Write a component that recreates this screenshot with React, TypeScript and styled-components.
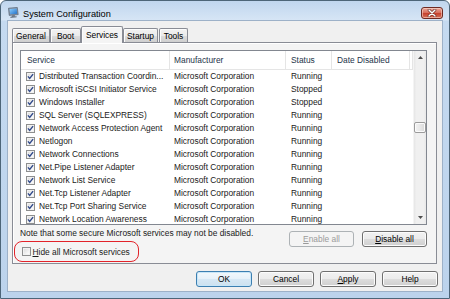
import React from "react";
import styled, { createGlobalStyle } from "styled-components";

const FONT = `"Liberation Sans", Arial, sans-serif`;

const Global = createGlobalStyle`
  html, body { margin: 0; padding: 0; background: #ffffff; }
  body { font-family: ${FONT}; font-size: 8.4px; color: #1a1a1a; }
  * { box-sizing: border-box; }
`;

const Frame = styled.div`
  width: 450px;
  height: 299px;
  border: 1px solid #4d6578;
  border-radius: 6px 6px 0 0;
  background: linear-gradient(to bottom, #c0d6ee 0px, #d6e5f5 19px, #c5daf0 20px, #bcd3ec 100%);
  display: flex;
  flex-direction: column;
  padding: 0 6px 6px 6px;
  overflow: hidden;
`;

const TitleBar = styled.div`
  height: 19px;
  display: flex;
  align-items: flex-start;
  padding-top: 6px;
`;

const TitleIcon = styled.svg`
  width: 11px;
  height: 11px;
  margin-left: 1px;
  flex: none;
`;

const TitleText = styled.div`
  margin-left: 4px;
  margin-top: 2px;
  font-size: 9.2px;
  line-height: 11px;
  color: #000;
`;

const CloseButton = styled.div`
  margin-left: auto;
  width: 22px;
  height: 12px;
  border: 1px solid #6e2a22;
  border-radius: 3px;
  background: linear-gradient(to bottom, #e9a99b 0%, #d9705f 45%, #c6432f 55%, #d5705a 100%);
  box-shadow: inset 0 0 0 1px rgba(255, 220, 210, 0.55);
  display: flex;
  align-items: center;
  justify-content: center;
`;

const Client = styled.div`
  flex: 1;
  background: #f0f0f0;
  border: 1px solid #9db1c8;
  padding: 5px 5px 4px 4px;
  display: flex;
  flex-direction: column;
`;

const TabStrip = styled.div`
  height: 17px;
  margin-bottom: -1px;
  display: flex;
  align-items: flex-end;
  position: relative;
  z-index: 1;
`;

const Tab = styled.div<{ $w: number; $active?: boolean; $gap?: number }>`
  width: ${(p) => p.$w}px;
  margin-left: ${(p) => p.$gap ?? 0}px;
  height: ${(p) => (p.$active ? 17 : 14)}px;
  margin-bottom: ${(p) => (p.$active ? 0 : 1)}px;
  border: 1px solid #898c95;
  border-bottom: none;
  border-radius: 2px 2px 0 0;
  background: ${(p) =>
    p.$active
      ? "#f4f4f4"
      : "linear-gradient(to bottom, #f2f2f2 0%, #ebebeb 50%, #dddddd 51%, #cfcfcf 100%)"};
  box-shadow: inset 1px 1px 0 #fcfcfc;
  display: flex;
  align-items: center;
  justify-content: center;
  padding-bottom: ${(p) => (p.$active ? 1 : 0)}px;
  font-size: 8.4px;
  color: #000;
  line-height: 10px;
`;

const Panel = styled.div`
  height: 222px;
  border: 1px solid #898c95;
  background: #f4f4f4;
  box-shadow: inset 1px 1px 0 #ffffff;
  padding: 7px 9px 0 7px;
  display: flex;
  flex-direction: column;
`;

const ListBox = styled.div`
  height: 175px;
  border: 1px solid #828790;
  background: #ffffff;
  display: flex;
  overflow: hidden;
`;

const Table = styled.div`
  flex: 1;
  overflow: hidden;
`;

const GRID = "149px 116px 46px 78px 1fr";

const HeaderRow = styled.div`
  height: 19px;
  display: grid;
  grid-template-columns: ${GRID};
  border-bottom: 1px solid #e5e5e5;
  background: #ffffff;
`;

const HeaderCell = styled.div<{ $pad: number }>`
  border-right: 1px solid #e5e5e5;
  padding-left: ${(p) => p.$pad}px;
  display: flex;
  align-items: center;
  color: #24344a;
  white-space: nowrap;
`;

const Row = styled.div`
  height: 13px;
  display: grid;
  grid-template-columns: ${GRID};
  align-items: center;
`;

const Cell = styled.div<{ $pad: number }>`
  padding-left: ${(p) => p.$pad}px;
  display: flex;
  align-items: center;
  white-space: nowrap;
  overflow: hidden;
  line-height: 13px;
  color: #1a1a1a;
`;

const CheckBoxBox = styled.span<{ $gap: number }>`
  width: 9px;
  height: 9px;
  flex: none;
  margin-right: ${(p) => p.$gap}px;
  border: 1px solid #8e8f8f;
  background: linear-gradient(135deg, #d8d8d8 0%, #f6f6f6 70%, #ffffff 100%);
  box-shadow: inset 0 0 0 1px #f2f2f2;
  display: flex;
  align-items: center;
  justify-content: center;
`;

const ScrollBar = styled.div`
  width: 13px;
  flex: none;
  background: linear-gradient(to right, #e6e6e6 0%, #f0f0f0 20%, #f0f0f0 80%, #e8e8e8 100%);
  border-left: 1px solid #f4f4f4;
  display: flex;
  flex-direction: column;
`;

const ScrollArrow = styled.div`
  height: 13px;
  display: flex;
  align-items: center;
  justify-content: center;
`;

const ScrollTrack = styled.div`
  flex: 1;
  display: flex;
  flex-direction: column;
  align-items: center;
`;

const Thumb = styled.div`
  width: 12px;
  height: 11px;
  border: 1px solid #9b9b9b;
  border-radius: 2px;
  background: linear-gradient(to right, #f3f3f3 0%, #e8e8e8 50%, #d8d8d8 100%);
  box-shadow: inset 0 0 0 1px #fbfbfb;
`;

const Footer = styled.div`
  margin-top: 3px;
  display: flex;
  justify-content: space-between;
  align-items: flex-start;
`;

const LeftCol = styled.div`
  display: flex;
  flex-direction: column;
`;

const Note = styled.div`
  line-height: 10px;
  color: #1a1a1a;
  white-space: nowrap;
`;

const HideBox = styled.div`
  margin-top: 3px;
  margin-left: -6px;
  width: 125px;
  height: 21px;
  border: 1.5px solid #e2232a;
  border-radius: 8px;
  display: flex;
  align-items: center;
  padding-left: 6.5px;
  color: #1a1a1a;
`;

const ButtonGroup = styled.div`
  margin-top: 3px;
  display: flex;
  gap: 8px;
`;

const Button = styled.div<{ $w: number; $disabled?: boolean; $default?: boolean }>`
  width: ${(p) => p.$w}px;
  height: 16px;
  border: 1px solid ${(p) => (p.$disabled ? "#adb2b5" : p.$default ? "#3c7fb1" : "#707070")};
  border-radius: 3px;
  background: ${(p) =>
    p.$disabled
      ? "#f4f4f4"
      : p.$default
      ? "linear-gradient(to bottom, #f2f8fc 0%, #e6f1f9 50%, #d6e8f5 51%, #cde1ef 100%)"
      : "linear-gradient(to bottom, #f2f2f2 0%, #ebebeb 50%, #dddddd 51%, #cfcfcf 100%)"};
  box-shadow: inset 0 0 0 1px ${(p) => (p.$disabled ? "#f4f4f4" : p.$default ? "#c8e6f8" : "#fcfcfc")};
  color: ${(p) => (p.$disabled ? "#9a9a9a" : "#000")};
  display: flex;
  align-items: center;
  justify-content: center;
  line-height: 10px;
`;

const DialogButtons = styled.div`
  margin-top: 7px;
  margin-right: -1px;
  display: flex;
  justify-content: flex-end;
  gap: 6px;
`;

const U = styled.span`
  text-decoration: underline;
`;

const services: [string, string][] = [
  ["Distributed Transaction Coordin...", "Running"],
  ["Microsoft iSCSI Initiator Service", "Stopped"],
  ["Windows Installer", "Stopped"],
  ["SQL Server (SQLEXPRESS)", "Running"],
  ["Network Access Protection Agent", "Running"],
  ["Netlogon", "Running"],
  ["Network Connections", "Running"],
  ["Net.Pipe Listener Adapter", "Running"],
  ["Network List Service", "Running"],
  ["Net.Tcp Listener Adapter", "Running"],
  ["Net.Tcp Port Sharing Service", "Running"],
  ["Network Location Awareness", "Running"],
];

const CheckBox: React.FC<{ checked?: boolean; gap: number }> = ({ checked, gap }) => (
  <CheckBoxBox $gap={gap}>
    {checked && (
      <svg width="7" height="7" viewBox="0 0 7 7">
        <path d="M0.9 3.4 L2.7 5.4 L6.1 1.1" fill="none" stroke="#30498a" strokeWidth="1.4" />
      </svg>
    )}
  </CheckBoxBox>
);

const AppIcon = () => (
  <TitleIcon viewBox="0 0 11 11">
    <defs>
      <linearGradient id="scr" x1="0" y1="0" x2="1" y2="1">
        <stop offset="0" stopColor="#8fd0ff" />
        <stop offset="1" stopColor="#1f6fc8" />
      </linearGradient>
    </defs>
    <path d="M0.5 1.2 L9.3 0.4 L10.2 7.6 L1.2 8.4 Z" fill="#8a96a6" stroke="#4a5768" strokeWidth="0.6" />
    <path d="M1.6 2 L8.6 1.4 L9.2 6.7 L2.1 7.3 Z" fill="url(#scr)" />
    <path d="M4.2 8.3 L6.6 8.1 L7.2 9.6 L3.6 9.9 Z" fill="#6d7886" />
    <path d="M2.4 10.3 L8.6 9.8" stroke="#4a5768" strokeWidth="0.9" />
  </TitleIcon>
);

const CloseGlyph = () => (
  <svg width="10" height="8" viewBox="0 0 10 8">
    <path d="M2 1 L8 7 M8 1 L2 7" stroke="#5a1d16" strokeWidth="2.6" strokeLinecap="round" />
    <path d="M2 1 L8 7 M8 1 L2 7" stroke="#ffffff" strokeWidth="1.5" strokeLinecap="round" />
  </svg>
);

const Arrow: React.FC<{ up?: boolean }> = ({ up }) => (
  <svg width="5" height="3" viewBox="0 0 5 3">
    <path d={up ? "M0 3 L2.5 0 L5 3 Z" : "M0 0 L2.5 3 L5 0 Z"} fill="#4d4d4d" />
  </svg>
);

const tabs = [
  { label: "General", w: 38, gap: 0 },
  { label: "Boot", w: 31, gap: 0 },
  { label: "Services", w: 42, gap: 0, active: true },
  { label: "Startup", w: 35, gap: 0 },
  { label: "Tools", w: 29, gap: 1 },
];

export default function App() {
  return (
    <>
      <Global />
      <Frame>
        <TitleBar>
          <AppIcon />
          <TitleText>System Configuration</TitleText>
          <CloseButton>
            <CloseGlyph />
          </CloseButton>
        </TitleBar>
        <Client>
          <TabStrip>
            {tabs.map((t) => (
              <Tab key={t.label} $w={t.w} $gap={t.gap} $active={t.active}>
                {t.label}
              </Tab>
            ))}
          </TabStrip>
          <Panel>
            <ListBox>
              <Table>
                <HeaderRow>
                  <HeaderCell $pad={6}>Service</HeaderCell>
                  <HeaderCell $pad={4}>Manufacturer</HeaderCell>
                  <HeaderCell $pad={5}>Status</HeaderCell>
                  <HeaderCell $pad={5}>Date Disabled</HeaderCell>
                  <HeaderCell $pad={0} />
                </HeaderRow>
                {services.map(([name, status]) => (
                  <Row key={name}>
                    <Cell $pad={5}>
                      <CheckBox checked gap={4} />
                      {name}
                    </Cell>
                    <Cell $pad={4}>Microsoft Corporation</Cell>
                    <Cell $pad={5}>{status}</Cell>
                    <Cell $pad={5} />
                    <Cell $pad={0} />
                  </Row>
                ))}
              </Table>
              <ScrollBar>
                <ScrollArrow>
                  <Arrow up />
                </ScrollArrow>
                <ScrollTrack>
                  <Thumb style={{ marginTop: 58 }} />
                </ScrollTrack>
                <ScrollArrow>
                  <Arrow />
                </ScrollArrow>
              </ScrollBar>
            </ListBox>
            <Footer>
              <LeftCol>
                <Note>Note that some secure Microsoft services may not be disabled.</Note>
                <HideBox>
                  <CheckBox gap={2} />
                  <span>
                    <U>H</U>ide all Microsoft services
                  </span>
                </HideBox>
              </LeftCol>
              <ButtonGroup>
                <Button $w={65} $disabled>
                  <span>
                    <U>E</U>nable all
                  </span>
                </Button>
                <Button $w={65}>
                  <span>
                    <U>D</U>isable all
                  </span>
                </Button>
              </ButtonGroup>
            </Footer>
          </Panel>
          <DialogButtons>
            <Button $w={56} $default>OK</Button>
            <Button $w={56}>Cancel</Button>
            <Button $w={56}>
              <span>
                <U>A</U>pply
              </span>
            </Button>
            <Button $w={56}>Help</Button>
          </DialogButtons>
        </Client>
      </Frame>
    </>
  );
}
